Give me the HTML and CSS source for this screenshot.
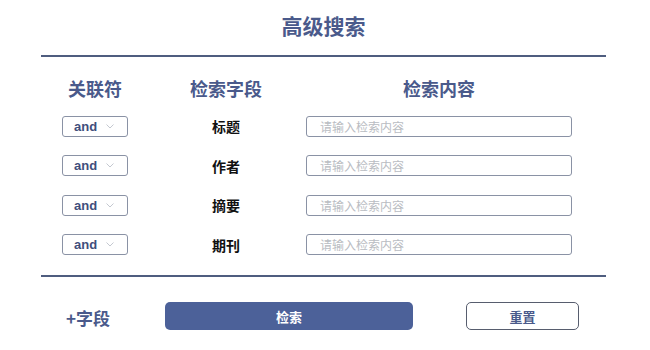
FILE: index.html
```html
<!DOCTYPE html>
<html lang="zh">
<head>
<meta charset="utf-8">
<title>高级搜索</title>
<link rel="stylesheet" href="styles.css">
</head>
<body>
<div class="panel">
  <div class="title">高级搜索</div>
  <div class="grid">
    <div class="head">关联符</div>
    <div class="head">检索字段</div>
    <div class="head">检索内容</div>

    <div class="cell"><div class="select"><span>and</span><svg class="chev" width="8" height="5" viewBox="0 0 8 5"><path d="M0.5 0.5 L4 4 L7.5 0.5" fill="none" stroke="#c4c8d0" stroke-width="1"/></svg></div></div>
    <div class="cell field">标题</div>
    <div class="cell"><div class="input">请输入检索内容</div></div>

    <div class="cell"><div class="select"><span>and</span><svg class="chev" width="8" height="5" viewBox="0 0 8 5"><path d="M0.5 0.5 L4 4 L7.5 0.5" fill="none" stroke="#c4c8d0" stroke-width="1"/></svg></div></div>
    <div class="cell field">作者</div>
    <div class="cell"><div class="input">请输入检索内容</div></div>

    <div class="cell"><div class="select"><span>and</span><svg class="chev" width="8" height="5" viewBox="0 0 8 5"><path d="M0.5 0.5 L4 4 L7.5 0.5" fill="none" stroke="#c4c8d0" stroke-width="1"/></svg></div></div>
    <div class="cell field">摘要</div>
    <div class="cell"><div class="input">请输入检索内容</div></div>

    <div class="cell"><div class="select"><span>and</span><svg class="chev" width="8" height="5" viewBox="0 0 8 5"><path d="M0.5 0.5 L4 4 L7.5 0.5" fill="none" stroke="#c4c8d0" stroke-width="1"/></svg></div></div>
    <div class="cell field">期刊</div>
    <div class="cell"><div class="input">请输入检索内容</div></div>
  </div>
  <div class="footer">
    <div class="add">+字段</div>
    <div class="btn primary">检索</div>
    <div class="btn ghost">重置</div>
  </div>
</div>
</body>
</html>
```
FILE: styles.css
```css
html, body {
  margin: 0;
  padding: 0;
  background: #ffffff;
}
body {
  font-family: "Noto Sans CJK SC", "Noto Sans", sans-serif;
  color: #111;
}
.panel {
  margin-left: 41px;
  width: 565px;
}
.title {
  box-sizing: border-box;
  height: 57px;
  padding-top: 11px;
  line-height: 28px;
  text-align: center;
  font-size: 21px;
  font-weight: 700;
  color: #4a5a8b;
  border-bottom: 2px solid #4f5d7f;
}
.grid {
  display: grid;
  grid-template-columns: 108px 154px 272px;
  grid-auto-rows: 21px;
  row-gap: 18.5px;
  padding-top: 19px;
  padding-bottom: 20px;
  border-bottom: 2px solid #4f5d7f;
}
.head {
  display: flex;
  align-items: center;
  justify-content: center;
  font-size: 18px;
  font-weight: 700;
  color: #4a5a8b;
  margin-bottom: -2px;
}
.cell {
  display: flex;
  align-items: center;
  justify-content: center;
}
.field {
  font-size: 14px;
  font-weight: 700;
  color: #111;
}
.select {
  box-sizing: border-box;
  width: 66px;
  height: 21px;
  border: 1px solid #8a92a5;
  border-radius: 3px;
  display: flex;
  align-items: center;
  padding-left: 11px;
  gap: 9px;
}
.select span {
  font-family: "Liberation Sans", Arial, sans-serif;
  font-size: 13px;
  font-weight: 700;
  color: #3f4e7c;
  line-height: 1;
}
.chev {
  display: block;
}
.input {
  box-sizing: border-box;
  width: 266px;
  height: 21px;
  border: 1px solid #8a92a5;
  border-radius: 3px;
  padding-left: 13px;
  display: flex;
  align-items: center;
  font-size: 12px;
  color: #b9bcc2;
}
.footer {
  display: flex;
  align-items: center;
  padding-top: 25px;
}
.add {
  box-sizing: border-box;
  width: 124px;
  padding-left: 25px;
  font-size: 17px;
  font-weight: 700;
  color: #4a5a8b;
  padding-top: 3px;
}
.btn {
  box-sizing: border-box;
  height: 28px;
  border-radius: 5px;
  display: flex;
  align-items: center;
  justify-content: center;
  font-size: 13px;
  font-weight: 700;
}
.primary {
  width: 248px;
  background: #4c6199;
  color: #ffffff;
}
.ghost {
  width: 113px;
  margin-left: 53px;
  border: 1.5px solid #575d6e;
  color: #4a5a8b;
  background: #fff;
}
```
